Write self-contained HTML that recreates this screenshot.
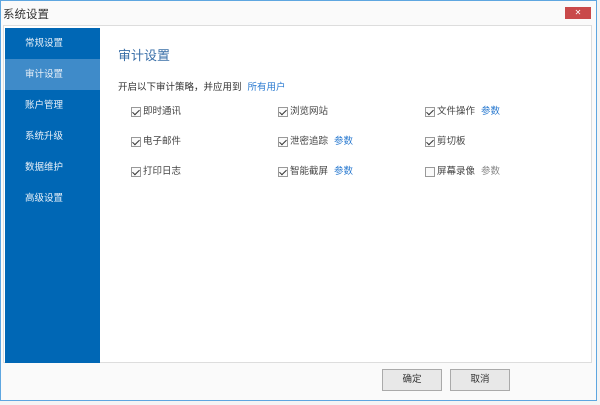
<!DOCTYPE html>
<html><head><meta charset="utf-8"><style>
*{margin:0;padding:0;box-sizing:border-box}
body{width:600px;height:405px;background:#f4f4f4;position:relative;overflow:hidden;font-family:"Liberation Sans","Noto Sans CJK SC",sans-serif;font-size:10px;color:#444}
.win{position:absolute;left:0;top:0;width:597px;height:401px;border:1px solid #5ea6e0;background:#fafafa}
.title{position:absolute;left:3px;top:6px;font-size:11.5px;color:#333}
.close{position:absolute;left:565px;top:7px;width:26px;height:12px;background:#c9494a;color:#fff;font-size:8px;text-align:center;line-height:12px}
.panel{position:absolute;left:3px;top:25px;width:589px;height:338px;background:#fff;border:1px solid #ddd}
.side{position:absolute;left:5px;top:28px;width:95px;height:335px;background:#0067b5}
.side div{position:absolute;left:0;width:95px;height:31px;line-height:31px;padding-left:20px;color:#e8f0f8;font-size:9.5px}
.side .sel{background:#3f8bc9}
.h{position:absolute;left:118px;top:45px;font-size:13px;color:#3a6fa8}
.desc{position:absolute;left:118px;top:79px;font-size:9.5px;color:#333}
.desc span{color:#2a7ad0;margin-left:6px}
.cb{position:absolute;font-size:9.5px;color:#444;line-height:12px}
.cb i{position:absolute;left:-12px;top:1px;width:10px;height:10px;border:1px solid #999;background:#fafafa}
.cb i.c::after{content:"";position:absolute;left:2px;top:0px;width:3px;height:6px;border:solid #333;border-width:0 1.5px 1.5px 0;transform:rotate(45deg)}
.cb span{color:#2a7ad0;margin-left:6px}
.cb span.g{color:#888}
.btn{position:absolute;top:369px;width:60px;height:22px;border:1px solid #aaa;background:#e8e8e8;text-align:center;line-height:20px;font-size:9.5px;color:#333}
</style></head><body>
<div class="win"></div>
<div class="title">系统设置</div>
<div class="close">✕</div>
<div class="panel"></div>
<div class="side">
<div style="top:0">常规设置</div>
<div class="sel" style="top:31px">审计设置</div>
<div style="top:62px">账户管理</div>
<div style="top:93px">系统升级</div>
<div style="top:124px">数据维护</div>
<div style="top:155px">高级设置</div>
</div>
<div class="h">审计设置</div>
<div class="desc">开启以下审计策略，并应用到<span>所有用户</span></div>
<div class="cb" style="left:143px;top:106px"><i class="c"></i>即时通讯</div>
<div class="cb" style="left:290px;top:106px"><i class="c"></i>浏览网站</div>
<div class="cb" style="left:437px;top:106px"><i class="c"></i>文件操作<span>参数</span></div>
<div class="cb" style="left:143px;top:136px"><i class="c"></i>电子邮件</div>
<div class="cb" style="left:290px;top:136px"><i class="c"></i>泄密追踪<span>参数</span></div>
<div class="cb" style="left:437px;top:136px"><i class="c"></i>剪切板</div>
<div class="cb" style="left:143px;top:166px"><i class="c"></i>打印日志</div>
<div class="cb" style="left:290px;top:166px"><i class="c"></i>智能截屏<span>参数</span></div>
<div class="cb" style="left:437px;top:166px"><i></i>屏幕录像<span class="g">参数</span></div>
<div class="btn" style="left:382px">确定</div>
<div class="btn" style="left:450px">取消</div>
</body></html>
